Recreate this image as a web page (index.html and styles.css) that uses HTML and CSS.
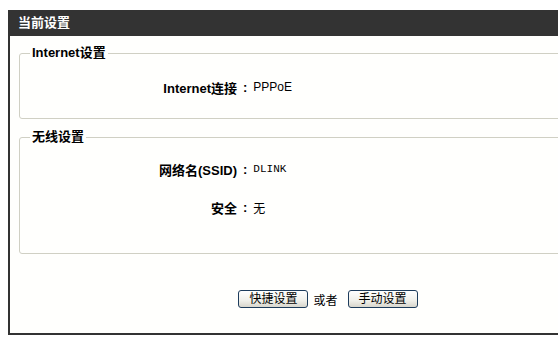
FILE: index.html
```html
<!DOCTYPE html>
<html>
<head>
<meta charset="utf-8">
<link rel="stylesheet" href="styles.css">
</head>
<body>
<div class="panel">
  <div class="title">当前设置</div>
  <div class="content">
    <fieldset class="box box-net">
      <legend>Internet设置</legend>
      <div class="row"><span class="label">Internet连接</span><span class="colon">:</span><span class="value">PPPoE</span></div>
    </fieldset>
    <fieldset class="box box-wifi">
      <legend>无线设置</legend>
      <div class="row"><span class="label">网络名(SSID)</span><span class="colon">:</span><span class="value mono">DLINK</span></div>
      <div class="row row-gap"><span class="label">安全</span><span class="colon">:</span><span class="value">无</span></div>
    </fieldset>
    <div class="actions">
      <button class="btn">快捷设置</button>
      <span class="or">或者</span>
      <button class="btn">手动设置</button>
    </div>
  </div>
</div>
</body>
</html>
```
FILE: styles.css
```css
html, body {
  margin: 0;
  padding: 0;
  background: #ffffff;
}
body {
  padding: 10px 0 0 8px;
  font-family: "Liberation Sans", "Noto Sans CJK SC", sans-serif;
  font-size: 12px;
  color: #000;
}
.panel {
  width: 627px;
  border-left: 2px solid #333333;
  border-bottom: 2px solid #333333;
}
.title {
  background: #333333;
  color: #ffffff;
  height: 26px;
  line-height: 26px;
  padding-left: 8px;
  font-size: 13px;
  font-weight: bold;
}
.content {
  padding: 10px 0 25px 9px;
  background: #fffffd;
}
.box {
  margin: 0;
  border: 1px solid #d0d0c4;
  border-radius: 3px;
  padding: 0;
}
.box legend {
  font-size: 13px;
  font-weight: bold;
  line-height: 14px;
  padding: 0 2px;
  margin-left: 10px;
}
.box-net {
  padding-top: 17px;
  padding-bottom: 21px;
}
.box-wifi {
  margin-top: 11px;
  padding-top: 15px;
  padding-bottom: 36px;
}
.row {
  display: flex;
  height: 20px;
  align-items: center;
}
.row-gap {
  margin-top: 18px;
}
.label {
  width: 217px;
  text-align: right;
  font-weight: bold;
  font-size: 13px;
  white-space: nowrap;
}
.colon {
  margin-left: 6px;
  font-weight: bold;
  font-size: 13px;
}
.value {
  padding-left: 6px;
  font-size: 12px;
}
.mono {
  font-family: "Liberation Mono", monospace;
  font-size: 11px;
}
.actions {
  margin-top: 36px;
  display: flex;
  justify-content: center;
  align-items: center;
  gap: 5px;
}
.btn {
  font-family: "Liberation Sans", "Noto Sans CJK SC", sans-serif;
  font-size: 12px;
  height: 18px;
  line-height: 14px;
  padding: 0 10px;
  border: 1px solid #1d3c5c;
  border-radius: 3px;
  background: linear-gradient(#ffffff, #f0f0ea 60%, #d8d6cc);
  color: #000;
}
.or {
  margin: 0 5px 0 0;
  font-size: 12px;
}
```
